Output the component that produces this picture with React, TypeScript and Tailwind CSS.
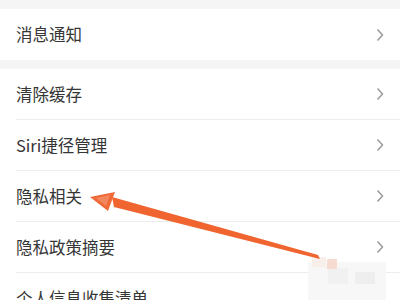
const rows = ["清除缓存", "Siri捷径管理", "隐私相关", "隐私政策摘要", "个人信息收集清单"];

function Chevron() {
  return (
    <svg width="8" height="14" viewBox="0 0 8 14" className="mr-[16px] shrink-0">
      <polyline points="1.5,1.5 6.5,7 1.5,12.5" fill="none" stroke="#9a9a9a" strokeWidth="1.5" />
    </svg>
  );
}

function Row({ label, last }: { label: string; last?: boolean }) {
  return (
    <div className="flex h-[51px] shrink-0 items-center bg-white pl-[16px]">
      <div
        className={
          "flex h-full flex-1 items-center justify-between " +
          (last ? "" : "border-b border-[#ececec]")
        }
      >
        <span className="text-[16.5px] text-[#363636]">{label}</span>
        <Chevron />
      </div>
    </div>
  );
}

export default function App() {
  return (
    <div
      className="relative h-[300px] w-[400px] overflow-hidden bg-[#f5f5f5]"
      style={{ fontFamily: '"Noto Sans CJK SC", "Noto Sans", sans-serif' }}
    >
      <div className="h-[9px]" />
      <Row label="消息通知" last />
      <div className="h-[9px]" />
      {rows.map((r, i) => (
        <Row key={r} label={r} last={i === rows.length - 1} />
      ))}

      {/* 标注箭头 + 水印马赛克 */}
      <svg className="pointer-events-none absolute inset-0" width="400" height="300" viewBox="0 0 400 300">
        <rect x="308" y="262" width="78" height="38" fill="#f7f7f7" />
        <rect x="328" y="268" width="20" height="16" fill="#f1f1f1" />
        <rect x="355" y="272" width="20" height="12" fill="#eeeeee" />
        <rect x="312" y="257" width="14" height="10" fill="#f9efea" />
        <rect x="327" y="259" width="10" height="10" fill="#f6dcd0" />
        <polygon points="112,197 114,207 320,259 318,255" fill="#f0642f" />
        <polygon points="90,197 115,192 108,211" fill="#ef6a38" />
        <polygon points="96,198 110,195 106,206" fill="#f39a76" opacity="0.6" />
      </svg>
    </div>
  );
}
